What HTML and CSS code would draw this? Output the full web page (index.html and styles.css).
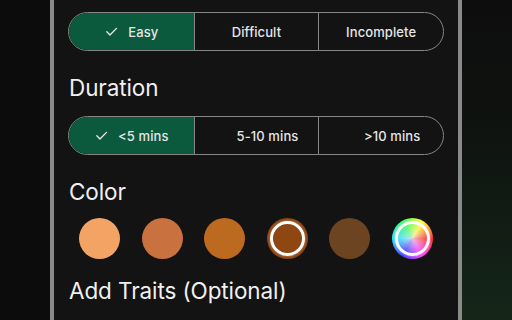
FILE: index.html
```html
<!DOCTYPE html>
<html>
<head>
<meta charset="utf-8">
<link rel="stylesheet" href="styles.css">
</head>
<body>
<div class="screen">
  <div class="gutter-left"></div>
  <main class="panel">
    <div class="segmented">
      <div class="seg seg-on">
        <svg class="check" viewBox="0 0 24 24"><path d="M4.5 12.5l5 5L20 7" /></svg>
        <span>Easy</span>
      </div>
      <div class="seg"><span>Difficult</span></div>
      <div class="seg"><span>Incomplete</span></div>
    </div>

    <h2 class="heading heading-duration">Duration</h2>
    <div class="segmented">
      <div class="seg seg-on">
        <svg class="check" viewBox="0 0 24 24"><path d="M4.5 12.5l5 5L20 7" /></svg>
        <span>&lt;5 mins</span>
      </div>
      <div class="seg seg-pad"><span>5-10 mins</span></div>
      <div class="seg seg-pad"><span>&gt;10 mins</span></div>
    </div>

    <h2 class="heading heading-color">Color</h2>
    <div class="swatches">
      <div class="swatch c1"></div>
      <div class="swatch c2"></div>
      <div class="swatch c3"></div>
      <div class="swatch c4 selected"></div>
      <div class="swatch c5"></div>
      <div class="swatch rainbow selected"></div>
    </div>

    <h2 class="heading heading-traits">Add Traits (Optional)</h2>
  </main>
  <div class="gutter-right"></div>
</div>
</body>
</html>
```

FILE: styles.css
```css
* { box-sizing: border-box; }
html, body {
  margin: 0;
  padding: 0;
  width: 512px;
  height: 320px;
  overflow: hidden;
  background: #0c0c0c;
  font-family: Inter, "Noto Sans", sans-serif;
  color: #ececec;
}
.screen {
  display: flex;
  height: 320px;
}
.gutter-left {
  width: 50px;
  background: #0c0c0c;
}
.gutter-right {
  flex: 1;
  background: linear-gradient(to bottom, #0d0d0d 0%, #0f1410 45%, #152619 100%);
}
.panel {
  width: 412px;
  background: #131313;
  border-left: 4px solid #8a8a8a;
  border-right: 4px solid #8a8a8a;
  padding: 12px 14px 0 14px;
  display: flex;
  flex-direction: column;
}
.segmented {
  display: grid;
  grid-template-columns: 1fr 1fr 1fr;
  height: 39px;
  border: 1.5px solid #858585;
  border-radius: 20px;
  overflow: hidden;
}
.seg {
  display: flex;
  align-items: center;
  justify-content: center;
  gap: 9px;
  font-size: 13px;
  font-weight: 500;
  color: #e6e6e6;
  letter-spacing: 0.1px;
}
.seg + .seg {
  border-left: 1.5px solid #858585;
}
.seg-on {
  background: #0b5a3e;
}
.seg-pad {
  padding-left: 22px;
}
.check {
  width: 15px;
  height: 15px;
  fill: none;
  stroke: #e6e6e6;
  stroke-width: 2.2;
  stroke-linecap: round;
  stroke-linejoin: round;
}
.heading {
  margin: 0;
  font-size: 22.5px;
  font-weight: 400;
  line-height: 28px;
  color: #f0f0f0;
  padding-left: 1px;
  letter-spacing: -0.1px;
}
.heading-duration {
  margin-top: 23px;
  margin-bottom: 14px;
}
.heading-color {
  margin-top: 23px;
  margin-bottom: 12px;
}
.heading-traits {
  margin-top: 18px;
}
.swatches {
  display: flex;
  gap: 21.5px;
  padding-left: 11px;
}
.swatch {
  position: relative;
  width: 41px;
  height: 41px;
  border-radius: 50%;
  flex: none;
}
.c1 { background: #f3a464; }
.c2 { background: #c9713f; }
.c3 { background: #bd6a21; }
.c4 { background: #8e4613; }
.c5 { background: #6c4421; }
.rainbow {
  background:
    radial-gradient(circle, rgba(235,235,235,0.75) 0%, rgba(235,235,235,0.2) 45%, rgba(235,235,235,0) 70%),
    conic-gradient(from 90deg, #ff3030, #ff40ff, #4040ff, #30e0ff, #30ff60, #ffff30, #ff3030);
}
.selected::after {
  content: "";
  position: absolute;
  inset: 3px;
  border: 3.5px solid #fff;
  border-radius: 50%;
  box-shadow: 0 0 2px rgba(255,255,255,0.6);
}
```
